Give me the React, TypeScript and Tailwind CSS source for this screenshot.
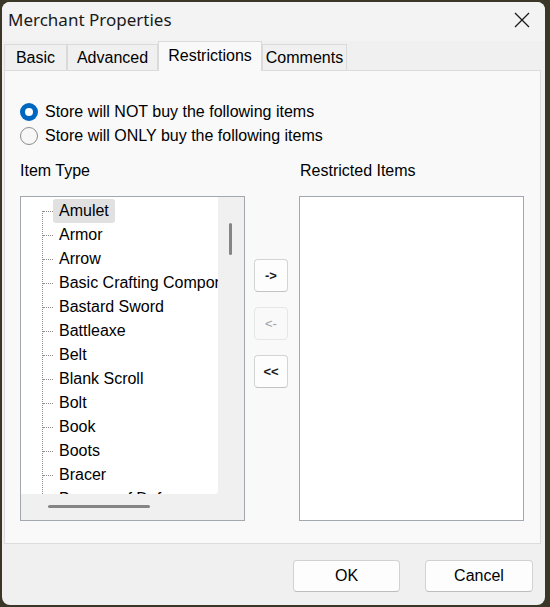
const items = [
  'Amulet',
  'Armor',
  'Arrow',
  'Basic Crafting Compor',
  'Bastard Sword',
  'Battleaxe',
  'Belt',
  'Blank Scroll',
  'Bolt',
  'Book',
  'Boots',
  'Bracer',
  'Bracers of Defense',
];

const tabs = [
  { label: 'Basic', w: 'w-[63px]' },
  { label: 'Advanced', w: 'w-[91px]' },
  { label: 'Restrictions', w: 'w-[104px]', active: true },
  { label: 'Comments', w: 'w-[85px]' },
];

function Radio({ checked, label }: { checked?: boolean; label: string }) {
  return (
    <div className="flex h-[24px] items-center">
      {checked ? (
        <div className="flex h-[18px] w-[18px] items-center justify-center rounded-full bg-[#0067c0]">
          <div className="h-[8px] w-[8px] rounded-full bg-white" />
        </div>
      ) : (
        <div className="h-[18px] w-[18px] rounded-full border border-[#8b8b8b] bg-[#f7f7f7]" />
      )}
      <span className="ml-[7px]">{label}</span>
    </div>
  );
}

function TreeList() {
  return (
    <div className="grid h-[325px] w-[225px] grid-cols-[197px_26px] grid-rows-[297px_26px] border border-[#a3a7ae] bg-[#f0f0f0]">
      <div className="relative overflow-hidden rounded-br-[4px] bg-white pt-[2px]">
        <div className="absolute left-[21px] top-[14px] bottom-0 border-l border-dotted border-[#8d8d8d]" />
        {items.map((item, i) => (
          <div key={item} className="flex h-[24px] items-center whitespace-nowrap">
            <div className="ml-[22px] w-[10px] shrink-0 border-t border-dotted border-[#8d8d8d]" />
            <span
              className={
                i === 0
                  ? 'flex h-[24px] items-center rounded-[3px] bg-[#e1e1e1] px-[6px]'
                  : 'px-[6px]'
              }
            >
              {item}
            </span>
          </div>
        ))}
      </div>
      <div className="pl-[11px] pt-[26px]">
        <div className="h-[32px] w-[3px] rounded-full bg-[#858585]" />
      </div>
      <div className="pl-[27px] pt-[11px]">
        <div className="h-[3px] w-[102px] rounded-full bg-[#858585]" />
      </div>
      <div />
    </div>
  );
}

function SmallButton({ label, disabled }: { label: string; disabled?: boolean }) {
  return (
    <div
      className={
        disabled
          ? 'flex h-[33px] w-[34px] items-center justify-center rounded-[4px] border border-[#e6e6e6] bg-[#f9f9f9] text-[13px] text-[#a0a0a0]'
          : 'flex h-[33px] w-[34px] items-center justify-center rounded-[4px] border border-[#d4d4d4] border-b-[#c2c2c2] bg-[#fdfdfd] text-[13px] font-bold text-[#1a1a1a]'
      }
    >
      {label}
    </div>
  );
}

export default function App() {
  return (
    <div className="h-[607px] w-[550px] overflow-hidden bg-[#3a3628] pl-[2px] pt-[2px] font-['Liberation_Sans',Arial,sans-serif] text-[16px] text-black">
      <div className="flex h-[603px] w-[543px] flex-col overflow-hidden rounded-[8px] bg-[#f0f0f0]">
        <div className="flex h-[39px] items-center justify-between bg-[#f3f3f3] pb-[3px] pl-[6px] pr-[15px]">
          <span className="font-['Noto_Sans',sans-serif] text-[17px] text-[#1a1a1a]">Merchant Properties</span>
          <svg width="16" height="16" viewBox="0 0 16 16" className="text-[#1a1a1a]">
            <path d="M1 1L15 15M15 1L1 15" stroke="currentColor" strokeWidth="1.3" fill="none" />
          </svg>
        </div>

        <div className="flex h-[29px] items-end pl-[2px]">
          {tabs.map((t) =>
            t.active ? (
              <div
                key={t.label}
                className={`${t.w} relative z-10 -mb-px flex h-[30px] items-center justify-center border border-b-0 border-[#dadada] bg-[#f9f9f9] pb-[2px]`}
              >
                {t.label}
              </div>
            ) : (
              <div
                key={t.label}
                className={`${t.w} flex h-[26px] items-center justify-center border border-b-0 border-[#dadada] bg-[#f0f0f0]`}
              >
                {t.label}
              </div>
            )
          )}
        </div>

        <div className="ml-[2px] h-[474px] w-[537px] border border-[#dcdcdc] bg-[#f9f9f9] pl-[15px] pt-[29px]">
          <Radio checked label="Store will NOT buy the following items" />
          <Radio label="Store will ONLY buy the following items" />

          <div className="mt-[11px] flex">
            <div className="flex flex-col">
              <div className="flex h-[24px] items-center">Item Type</div>
              <div className="mt-[13px]">
                <TreeList />
              </div>
            </div>

            <div className="ml-[9px] flex flex-col gap-[15px] pt-[100px]">
              <SmallButton label="->" />
              <SmallButton label="<-" disabled />
              <SmallButton label="<<" />
            </div>

            <div className="ml-[11px] flex flex-col">
              <div className="flex h-[24px] items-center pl-[1px]">Restricted Items</div>
              <div className="mt-[13px] h-[325px] w-[225px] border border-[#a3a7ae] bg-white" />
            </div>
          </div>
        </div>

        <div className="flex justify-end gap-[25px] pr-[12px] pt-[16px]">
          <div className="flex h-[32px] w-[107px] items-center justify-center rounded-[4px] border border-[#d2d2d2] border-b-[#bdbdbd] bg-[#fdfdfd]">
            OK
          </div>
          <div className="flex h-[32px] w-[108px] items-center justify-center rounded-[4px] border border-[#d2d2d2] border-b-[#bdbdbd] bg-[#fdfdfd]">
            Cancel
          </div>
        </div>
      </div>
    </div>
  );
}
